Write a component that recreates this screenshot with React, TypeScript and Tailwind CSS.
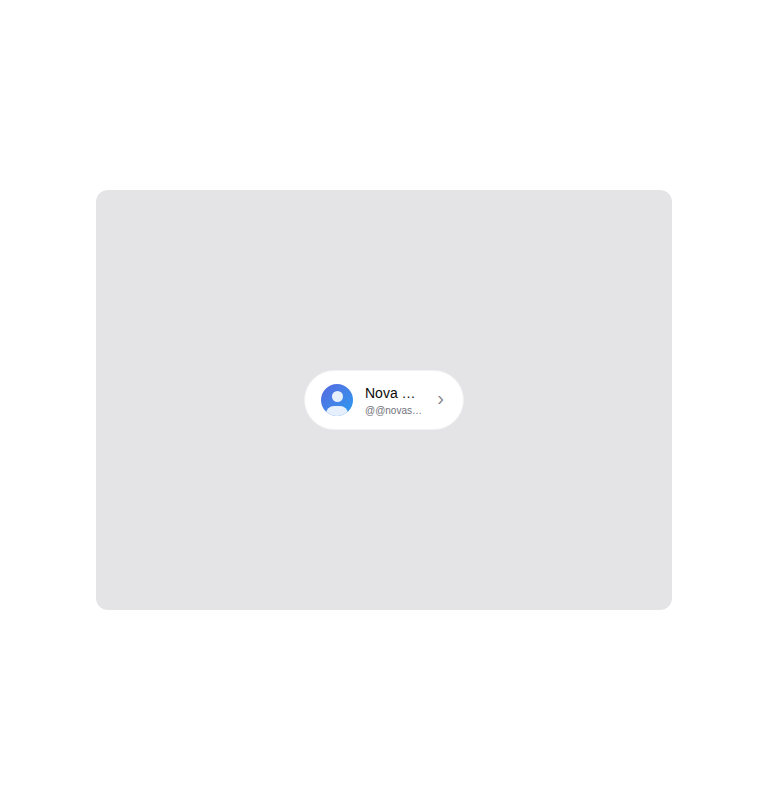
export default function App() {
  return (
    <div className="flex min-h-[800px] items-center justify-center bg-white font-['Liberation_Sans',Arial,sans-serif]">
      {/* Stage */}
      <div className="flex h-[420px] w-[576px] items-center justify-center rounded-xl bg-[#e4e4e7]">
        <button className="flex h-[60px] w-40 items-center rounded-full border border-[#f1f1f3] bg-white pl-4 pr-[19px] text-left">
          <div className="relative h-8 w-8 shrink-0 overflow-hidden rounded-full bg-gradient-to-br from-[#5468e0] to-[#1f9bf0]">
            <div className="absolute left-[10.5px] top-[7px] h-[11px] w-[11px] rounded-full bg-[#e6effc]" />
            <div className="absolute left-[5px] top-[22px] h-[16px] w-[22px] rounded-full bg-[#e6effc]" />
          </div>
          <div className="ml-3 flex w-[58px] min-w-0 flex-col">
            <span className="truncate text-sm leading-5 text-[#0a0a0a]">Nova Stellar</span>
            <span className="mt-px truncate text-[10px] leading-[14px] text-[#71717a]">@@novastellar</span>
          </div>
          <span className="mb-[5px] ml-auto text-xl leading-none text-[#8a8a93]">›</span>
        </button>
      </div>
    </div>
  );
}
